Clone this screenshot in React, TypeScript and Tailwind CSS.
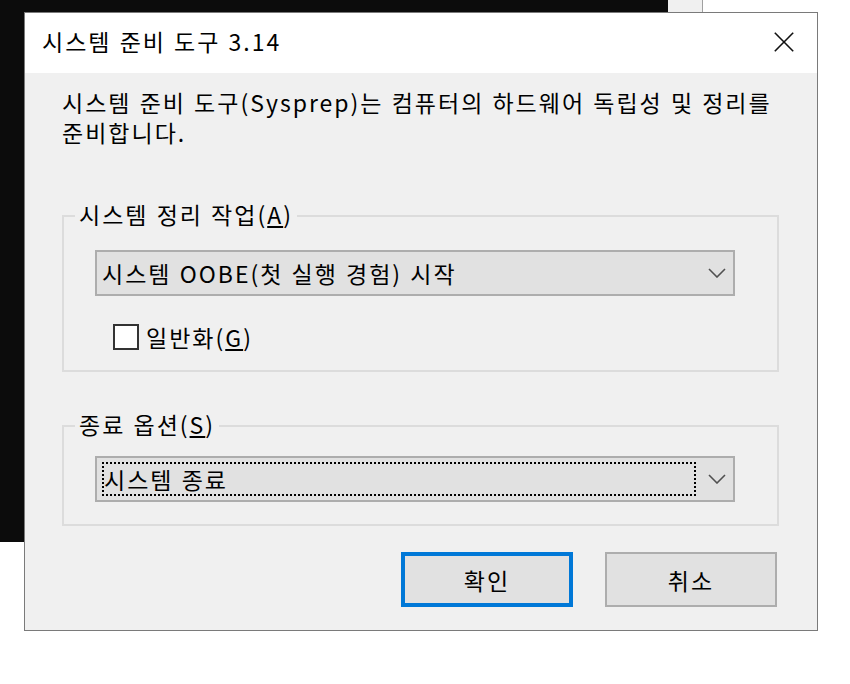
import React from "react";

function Chevron() {
  return (
    <svg width="18" height="10" viewBox="0 0 18 10" className="shrink-0">
      <polyline points="1,1 9,9 17,1" fill="none" stroke="#505050" strokeWidth="1.6" />
    </svg>
  );
}

export default function App() {
  return (
    <div className="relative w-[850px] h-[684px] bg-white overflow-hidden font-['Noto_Sans_CJK_KR',sans-serif] text-black tracking-[2px] [word-spacing:1px]">
      {/* background windows */}
      <div className="absolute left-0 top-0 w-[668px] h-[542px] bg-[#0c0c0c]" />
      <div className="absolute left-[668px] top-0 w-[35px] h-[12px] bg-[#f0f0f0] border-r border-[#a0a0a0]" />

      {/* dialog */}
      <div className="absolute left-[24px] top-[12px] w-[794px] h-[619px] border border-[#7a7a7a] flex flex-col">
        <div className="h-[60px] bg-white flex items-start justify-between pl-[17px] pr-[23px] shrink-0">
          <div className="pt-[13px] text-[23px] leading-[30px]">시스템 준비 도구 3.14</div>
          <svg width="20" height="20" viewBox="0 0 20 20" className="mt-[19px]">
            <line x1="0.8" y1="0.8" x2="19.2" y2="19.2" stroke="#111" strokeWidth="1.6" />
            <line x1="19.2" y1="0.8" x2="0.8" y2="19.2" stroke="#111" strokeWidth="1.6" />
          </svg>
        </div>

        <div className="flex-1 bg-[#f0f0f0] pl-[37px] pr-[38px] pt-[14px] flex flex-col text-[23px] leading-[30px]">
          <p>
            시스템 준비 도구(Sysprep)는 컴퓨터의 하드웨어 독립성 및 정리를
            <br />
            준비합니다.
          </p>

          <fieldset className="mt-[54px] border-2 border-[#dcdcdc] pb-[18px]">
            <legend className="ml-[11px] px-[4px]">
              <span className="block -translate-y-[2px]">
                시스템 정리 작업(<span className="underline underline-offset-2">A</span>)
              </span>
            </legend>
            <div className="ml-[31px] mt-[19px] w-[640px] h-[46px] border-2 border-[#adadad] bg-[#e1e1e1] flex items-center justify-between pl-[5px] pr-[7px]">
              <span>시스템 OOBE(첫 실행 경험) 시작</span>
              <Chevron />
            </div>
            <div className="mt-[26px] ml-[49px] flex items-center gap-[7px]">
              <div className="w-[26px] h-[26px] border-2 border-[#333333] bg-white shrink-0" />
              <span>
                일반화(<span className="underline underline-offset-2">G</span>)
              </span>
            </div>
          </fieldset>

          <fieldset className="mt-[39px] border-2 border-[#dcdcdc] pb-[22px]">
            <legend className="ml-[11px] px-[4px]">
              <span className="block -translate-y-[2px]">
                종료 옵션(<span className="underline underline-offset-2">S</span>)
              </span>
            </legend>
            <div className="ml-[31px] mt-[15px] w-[640px] h-[46px] border-2 border-[#adadad] bg-[#e1e1e1] flex items-center justify-between pl-[5px] pr-[7px]">
              <div className="w-[594px] h-[34px] border-2 border-dotted border-black flex items-center">
                <span>시스템 종료</span>
              </div>
              <Chevron />
            </div>
          </fieldset>

          <div className="mt-[26px] flex justify-end gap-[32px] pr-[2px]">
            <div className="w-[172px] h-[55px] border-4 border-[#0078d7] bg-[#e1e1e1] flex items-center justify-center">
              확인
            </div>
            <div className="w-[172px] h-[55px] border-2 border-[#adadad] bg-[#e1e1e1] flex items-center justify-center">
              취소
            </div>
          </div>
        </div>
      </div>
    </div>
  );
}
